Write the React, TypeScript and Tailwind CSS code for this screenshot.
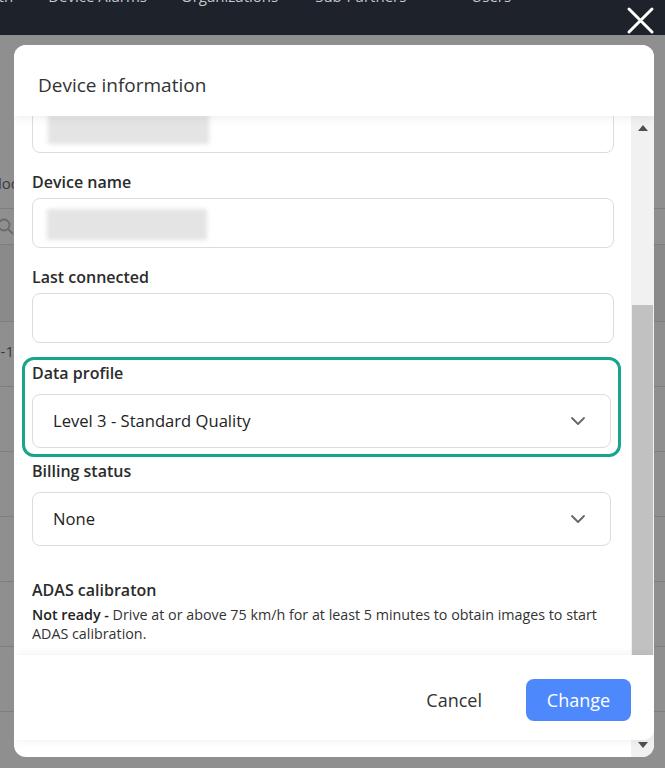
import React from 'react';

const font = { fontFamily: '"Open Sans", "Liberation Sans", sans-serif' };

const Chevron = () => (
    <svg width="16" height="10" viewBox="0 0 16 10" fill="none" className="shrink-0">
        <path d="M2 2l6 6 6-6" stroke="#666" strokeWidth="1.8" strokeLinecap="round" strokeLinejoin="round" />
    </svg>
);

const Blur = ({ className }: { className: string }) => (
    <div className={`absolute bg-[#e4e4e4] blur-[2px] ${className}`} />
);

const Label = ({ children, className = '' }: { children: React.ReactNode; className?: string }) => (
    <div className={`text-[16px] leading-[24px] font-semibold text-[#2b2b2b] ${className}`}>{children}</div>
);

const Field = ({ label, blur }: { label: string; blur?: boolean }) => (
    <div className="mt-[17px]">
        <Label className="mb-[4px]">{label}</Label>
        <div className="relative h-[50px] rounded-[8px] border border-[#dcdcdc] overflow-hidden">
            {blur && <Blur className="left-[14px] top-[10px] w-[160px] h-[31px]" />}
        </div>
    </div>
);

const Select = ({ value, className = '' }: { value: string; className?: string }) => (
    <div className={`h-[54px] rounded-[8px] border border-[#dcdcdc] flex items-center justify-between pl-[20px] pr-[24px] ${className}`}>
        <span className="text-[16.6px] text-[#222] pt-[1px]">{value}</span>
        <Chevron />
    </div>
);

export default function App() {
    return (
        <div style={font} className="relative w-[665px] h-[768px] overflow-hidden bg-[#8f8f8f]">
            {/* page behind the dialog */}
            <div className="h-[35px] bg-[#1e222a] text-[#c5c8ce] text-[15px] flex overflow-hidden">
                <div className="flex -mt-[15px] h-[24px] whitespace-nowrap">
                    <span className="-ml-[33px]">Health</span>
                    <span className="ml-[35px]">Device Alarms</span>
                    <span className="ml-[34px]">Organizations</span>
                    <span className="ml-[37px]">Sub-Partners</span>
                    <span className="ml-[65px]">Users</span>
                </div>
            </div>
            <div className="text-[#3a3a3a] text-[15px]">
                <div className="h-[173px] flex items-end pb-[14px] -ml-[2px]">lock</div>
                <div className="h-[37px] border-y border-[#7e7e7e] flex items-center">
                    <svg width="18" height="18" viewBox="0 0 18 18" className="-ml-[3px]">
                        <circle cx="7" cy="7" r="5.5" stroke="#6a6a6a" strokeWidth="1.8" fill="none" />
                        <path d="M11 11l5 5" stroke="#6a6a6a" strokeWidth="1.8" />
                    </svg>
                </div>
                <div className="h-[77px] bg-[#8a8a8a] border-b border-[#7e7e7e]" />
                <div className="h-[65px] border-b border-[#7e7e7e] flex items-center -ml-[8px] pb-[6px]">1-12</div>
                {[0, 1, 2, 3, 4, 5].map(i => (
                    <div key={i} className="h-[65px] border-b border-[#7e7e7e]" />
                ))}
            </div>

            {/* close */}
            <svg className="absolute left-[626px] top-[6px]" width="29" height="29" viewBox="0 0 29 29">
                <path d="M3 3l23 23M26 3L3 26" stroke="#fff" strokeWidth="3" strokeLinecap="round" />
            </svg>

            {/* dialog */}
            <div className="absolute left-[14px] top-[45px] w-[640px] h-[712px] rounded-[12px] bg-white overflow-hidden flex flex-col">
                <div className="relative z-10 h-[71px] shrink-0 bg-white px-[24px] pt-[10px] flex items-center shadow-[0_3px_8px_rgba(0,0,0,0.06)]">
                    <h2 className="text-[19px] font-medium text-[#333]">Device information</h2>
                </div>

                <div className="flex-1 flex min-h-0">
                    <div className="flex-1 overflow-hidden pl-[18px] pr-[17px]">
                        <div className="-mt-[13px]">
                            <div className="relative h-[50px] rounded-[8px] border border-[#dcdcdc] overflow-hidden">
                                <Blur className="left-[15px] top-[10px] w-[161px] h-[30px]" />
                            </div>
                            <Field label="Device name" blur />
                            <Field label="Last connected" />

                            <div className="mt-[14px] -ml-[10px] -mr-[7px] border-[3px] border-[#17a68a] rounded-[12px] px-[7px] pt-[1px] pb-[6px]">
                                <Label className="mb-[9px]">Data profile</Label>
                                <Select value="Level 3 - Standard Quality" />
                            </div>

                            <Label className="mt-[2px] mb-[9px]">Billing status</Label>
                            <Select value="None" className="mr-[3px]" />

                            <Label className="mt-[32px]">ADAS calibraton</Label>
                            <p className="mt-[3px] text-[14.3px] leading-[19px] text-[#333]">
                                <span className="font-semibold text-[#222]">Not ready - </span>
                                Drive at or above 75 km/h for at least 5 minutes to obtain images to start ADAS calibration.
                            </p>
                        </div>
                    </div>

                    <div className="w-[23px] shrink-0 bg-[#f1f1f1] flex flex-col items-center">
                        <div className="h-[24px] flex items-center justify-center">
                            <svg width="10" height="6" viewBox="0 0 10 6"><path d="M0 6L5 0l5 6z" fill="#505050" /></svg>
                        </div>
                        <div className="flex-1 w-full px-[1px] pt-[165px] pb-[24px] flex">
                            <div className="flex-1 bg-[#c1c1c1]" />
                        </div>
                        <div className="h-[24px] flex items-center justify-center">
                            <svg width="10" height="6" viewBox="0 0 10 6"><path d="M0 0h10L5 6z" fill="#505050" /></svg>
                        </div>
                    </div>
                </div>

                <div className="absolute left-0 right-0 bottom-[17px] h-[85px] bg-white rounded-br-[10px] shadow-[0_0_10px_rgba(0,0,0,0.07)] flex items-center justify-end pr-[23px] pt-[5px] gap-[24px]">
                    <button className="h-[42px] px-[20px] text-[18px] text-[#333]">Cancel</button>
                    <button className="h-[42px] w-[105px] rounded-[8px] bg-[#4d88fc] text-[18px] text-white">Change</button>
                </div>
            </div>
        </div>
    );
}
